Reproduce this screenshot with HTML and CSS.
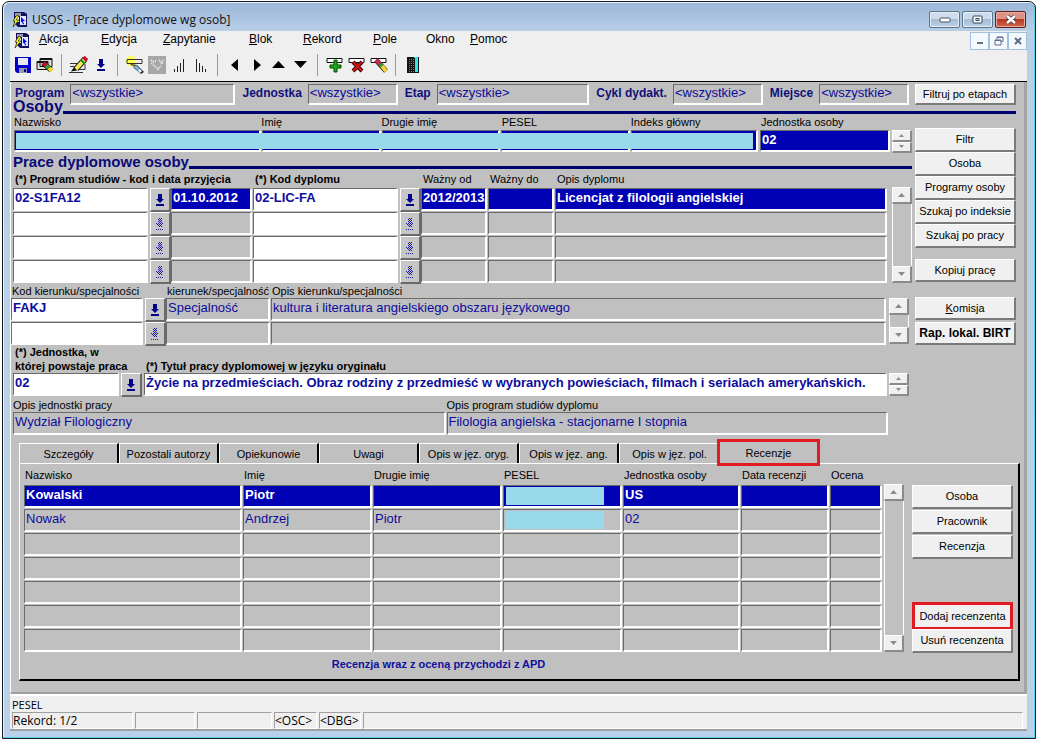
FILE: index.html
```html
<!DOCTYPE html>
<html lang="pl">
<head>
<meta charset="utf-8">
<title>USOS - [Prace dyplomowe wg osob]</title>
<link rel="stylesheet" href="styles.css">
</head>
<body>
<svg class="defs" aria-hidden="true">
  <defs>
    <pattern id="door" width="2" height="2" patternUnits="userSpaceOnUse"><path d="M0 0h2v2H0z" fill="#111"/><path d="M0 0h1v1H0z" fill="#8a8a40"/></pattern>
    <symbol id="app" viewBox="0 0 16 16"><path d="M2 0h10l3 2v13H6l-4-4z" fill="#10105e"/><path d="M3 1h6v3H3z" fill="#9a9aa8"/><path d="M3 5h4v5H3z" fill="#fff"/><path d="M8 4h6v9H8z" fill="#dfe8ff"/><path d="M9 5l4 4h-2l1 3-1 .5-1-3-1 1z" fill="#00f"/><path d="M5 3L1 9h2l-2 6 6-7H4l3-4z" fill="#ff0" stroke="#222" stroke-width=".7"/></symbol>
    <symbol id="down" viewBox="0 0 10 12"><path d="M3 0h4v5h2L5 9 1 5h2zM1 10h8v2H1z" fill="#00008b"/></symbol>
    <symbol id="downoff" viewBox="0 0 10 12"><path d="M4 .5h3M3 1.500h3M4 2.500h3M3 3.500h3M4 4.500h3M1 5.500h8M2 6.500h6M3 7.500h4M4 8.500h3M1 11.500h8" stroke="#1818a0" stroke-dasharray="1 1" shape-rendering="crispEdges"/></symbol>
    <symbol id="up" viewBox="0 0 7 4"><path d="M0 4h7L3.500 0z" fill="#8a8a8a"/></symbol>
    <symbol id="dn" viewBox="0 0 7 4"><path d="M0 0h7L3.500 4z" fill="#8a8a8a"/></symbol>
  </defs>
</svg>
<div class="window">
  <header class="titlebar">
    <svg width="16" height="16"><use href="#app"/></svg>
    <h1>USOS - [Prace dyplomowe wg osob]</h1>
    <div class="winctl">
      <button aria-label="Minimalizuj"><svg width="12" height="6"><rect x="1" y="1" width="10" height="4" rx="1" fill="#fff" stroke="#456"/></svg></button>
      <button aria-label="Maksymalizuj"><svg width="11" height="9"><rect x="1" y="1" width="9" height="7" rx="1" fill="#fff" stroke="#345"/><rect x="4" y="3.500" width="3" height="2" fill="#bcd" stroke="#345"/></svg></button>
      <button class="close" aria-label="Zamknij"><svg width="12" height="9"><path d="M2 1l8 7M10 1L2 8" stroke="#433" stroke-width="4"/><path d="M2 1l8 7M10 1L2 8" stroke="#fff" stroke-width="2.500"/></svg></button>
    </div>
  </header>
  <div class="chrome">
    <nav class="menubar">
      <svg width="16" height="16"><use href="#app"/></svg>
      <div class="menus">
        <button><u>A</u>kcja</button><button><u>E</u>dycja</button><button><u>Z</u>apytanie</button><button><u>B</u>lok</button><button><u>R</u>ekord</button><button><u>P</u>ole</button><button>Okno</button><button><u>P</u>omoc</button>
      </div>
      <div class="docctl">
        <button aria-label="Minimalizuj dokument"><svg width="10" height="10"><path d="M2 7h6" stroke="#5c6f8c" stroke-width="2"/></svg></button>
        <button aria-label="Przywróć dokument"><svg width="10" height="10" fill="none" stroke="#5c6f8c"><path d="M3 3.500V1h6v4.500H7M3 1.500h6M1 4h6v5H1zM1 4.500h6"/></svg></button>
        <button aria-label="Zamknij dokument"><svg width="10" height="10"><path d="M2 2l6 6M8 2L2 8" stroke="#5c6f8c" stroke-width="2"/></svg></button>
      </div>
    </nav>
    <div class="toolbar" role="toolbar" aria-label="Narzędzia">
      <button aria-label="Zapisz"><svg width="16" height="16"><path d="M0 0h16v16H2l-2-2z" fill="#0000c8"/><path d="M3 1h10v7H3z" fill="#e8e8f4"/><path d="M4 11h8v5H4z" fill="#99a"/><path d="M9 12h2v3H9z" fill="#00a"/></svg></button>
      <button aria-label="Wyczyść formularz"><svg width="18" height="18"><path d="M4 2.500h12v8H4zM1 5.500h11v8H1z" fill="#ddd" stroke="#111"/><path d="M1 5h11v2H1zM4 2h12v2H4z" fill="#111"/><path d="M7 7l8 7" stroke="#111" stroke-width="5"/><path d="M7 7l5 4" stroke="#c01030" stroke-width="4"/><path d="M10 10l3 2" stroke="#27a32b" stroke-width="4"/><path d="M13 12l3 3" stroke="#f2d430" stroke-width="4"/></svg></button>
      <i class="sep"></i>
      <button aria-label="Edytuj"><svg width="20" height="18"><path d="M1 7.500h9M1 10.500h6M0 16.500h14M9 13.500h7V8" fill="none" stroke="#333"/><path d="M16 3L7 13" stroke="#222" stroke-width="6"/><path d="M16 3L7 13" stroke="#f4ee50" stroke-width="4"/><path d="M13 6.500l1.500-1.500" stroke="#18911c" stroke-width="5"/><path d="M15 4l2.500-2.500" stroke="#d01030" stroke-width="5"/><path d="M5 11l-3 4.500 6-1z" fill="#111"/></svg></button>
      <button aria-label="Lista wartości"><svg width="10" height="12"><use href="#down"/></svg></button>
      <i class="sep"></i>
      <button aria-label="Wprowadź zapytanie"><svg width="20" height="18"><circle cx="6" cy="5" r="5" fill="#ffff50"/><path d="M2 3.500h15v4H2z" fill="none" stroke="#333"/><path d="M5 8l7 1 7 7-3 2-7-6z" fill="#222"/><path d="M6 9l4 1-2 2z" fill="#dd4"/><path d="M10 10l6 6" stroke="#7fb8e0" stroke-width="3"/><path d="M14 14l2 2" stroke="#fff" stroke-width="2"/></svg></button>
      <button aria-label="Wykonaj zapytanie" disabled><svg width="18" height="18"><path d="M0 0h18v18H0z" fill="#a6a6a6"/><path d="M3 4l3 2-3 2M7 5h2M11 4l3 4 1-4M5 9l3 2 2 2 3-3" fill="none" stroke="#eee" stroke-dasharray="1 1" stroke-width="2"/></svg></button>
      <button aria-label="Sortuj rosnąco"><svg width="14" height="15"><path d="M2.500 11v3M5.500 8v6M8.500 5v9M11.500 1v13" stroke="#222"/></svg></button>
      <button aria-label="Sortuj malejąco"><svg width="14" height="15"><path d="M2.500 1v13M5.500 5v9M8.500 8v6M11.500 11v3" stroke="#222"/></svg></button>
      <i class="sep"></i>
      <button aria-label="Poprzedni blok"><svg width="14" height="12"><path d="M10 0v12L3 6z"/></svg></button>
      <button aria-label="Następny blok"><svg width="14" height="12"><path d="M4 0v12l7-6z"/></svg></button>
      <button aria-label="Poprzedni rekord"><svg width="14" height="12"><path d="M0 9h13L6.500 2z"/></svg></button>
      <button aria-label="Następny rekord"><svg width="14" height="12"><path d="M0 2h13l-6.500 7z"/></svg></button>
      <i class="sep"></i>
      <button aria-label="Dodaj rekord"><svg width="18" height="16"><path d="M1 1.500h15v4H1z" fill="#fff" stroke="#111"/><path d="M8 3h3v5h4v3h-4v4H8v-4H4V8h4z" fill="#1fa51f" stroke="#064d06"/></svg></button>
      <button aria-label="Usuń rekord"><svg width="18" height="16"><path d="M1 1.500h15v4H1z" fill="#fff" stroke="#111"/><path d="M5 5l9 9M14 5l-9 9" stroke="#400" stroke-width="4"/><path d="M5 5l9 9M14 5l-9 9" stroke="#c81818" stroke-width="2"/></svg></button>
      <button aria-label="Wyczyść rekord"><svg width="18" height="16"><path d="M1 1.500h15v4H1z" fill="#fff" stroke="#111"/><path d="M6 3l10 11" stroke="#222" stroke-width="5"/><path d="M6 3l4 4" stroke="#d02850" stroke-width="4"/><path d="M10 7l2 2" stroke="#27a32b" stroke-width="4"/><path d="M12 9l4 5" stroke="#f2d430" stroke-width="4"/></svg></button>
      <i class="sep"></i>
      <button aria-label="Wyjście"><svg width="12" height="16"><path d="M0 0h12v16H0z" fill="#111"/><path d="M7 0h4v15H7z" fill="#2ee6ee"/><path d="M1 2l7-1v14H1z" fill="url(#door)"/></svg></button>
    </div>
  </div>

  <main>
    <div class="filters">
      <label for="f1">Program</label><input id="f1" class="fld f-wide" value="&lt;wszystkie&gt;" readonly>
      <label for="f2">Jednostka</label><input id="f2" class="fld" value="&lt;wszystkie&gt;" readonly>
      <label for="f3">Etap</label><input id="f3" class="fld f-mid" value="&lt;wszystkie&gt;" readonly>
      <label for="f4">Cykl dydakt.</label><input id="f4" class="fld" value="&lt;wszystkie&gt;" readonly>
      <label for="f5">Miejsce</label><input id="f5" class="fld" value="&lt;wszystkie&gt;" readonly>
      <button class="btn">Filtruj po etapach</button>
    </div>
    <h2 class="first">Osoby</h2>
    <div class="upper">
      <div class="forms">
        <div class="person labels">
          <label for="o1">Nazwisko</label><label for="o2">Imię</label><label for="o3">Drugie imię</label><label for="o4">PESEL</label><label for="o5">Indeks główny</label><label for="o6">Jednostka osoby</label>
        </div>
        <div class="person">
          <div class="hidden-data">
            <input id="o1" class="fld sel"><input id="o2" class="fld sel"><input id="o3" class="fld sel"><input id="o4" class="fld sel"><input id="o5" class="fld sel">
          </div>
          <input id="o6" class="fld sel" value="02">
          <div class="spin"><button aria-label="Poprzednia osoba"><svg width="5" height="3"><use href="#up"/></svg></button><button aria-label="Następna osoba"><svg width="5" height="3"><use href="#dn"/></svg></button></div>
        </div>
        <h2>Prace dyplomowe osoby</h2>
        <div class="scrolled theses">
          <table>
            <colgroup><col class="w158"><col class="w82"><col class="w168"><col class="w67"><col class="w67"><col></colgroup>
            <thead><tr><th class="b">(*) Program studiów - kod i data przyjęcia</th><th></th><th class="b">(*) Kod dyplomu</th><th>Ważny od</th><th>Ważny do</th><th>Opis dyplomu</th></tr></thead>
            <tbody>
              <tr><td><div class="lov"><input class="fld edit" aria-label="Program studiów" value="02-S1FA12"><button aria-label="Wybierz program"><svg width="10" height="12"><use href="#down"/></svg></button></div></td><td><input class="fld sel" aria-label="Data przyjęcia" value="01.10.2012"></td><td><div class="lov"><input class="fld edit" aria-label="Kod dyplomu" value="02-LIC-FA"><button aria-label="Wybierz dyplom"><svg width="10" height="12"><use href="#down"/></svg></button></div></td><td><input class="fld sel" aria-label="Ważny od" value="2012/2013/L"></td><td><input class="fld sel" aria-label="Ważny do"></td><td><input class="fld sel" aria-label="Opis dyplomu" value="Licencjat z filologii angielskiej"></td></tr>
              <tr><td><div class="lov"><input class="fld edit" aria-label="Program studiów 2"><button disabled aria-label="Wybierz program"><svg width="10" height="12"><use href="#downoff"/></svg></button></div></td><td><input class="fld" aria-label="Data przyjęcia 2"></td><td><div class="lov"><input class="fld edit" aria-label="Kod dyplomu 2"><button disabled aria-label="Wybierz dyplom"><svg width="10" height="12"><use href="#downoff"/></svg></button></div></td><td><input class="fld" aria-label="Ważny od 2"></td><td><input class="fld" aria-label="Ważny do 2"></td><td><input class="fld" aria-label="Opis dyplomu 2"></td></tr>
              <tr><td><div class="lov"><input class="fld edit" aria-label="Program studiów 3"><button disabled aria-label="Wybierz program"><svg width="10" height="12"><use href="#downoff"/></svg></button></div></td><td><input class="fld" aria-label="Data przyjęcia 3"></td><td><div class="lov"><input class="fld edit" aria-label="Kod dyplomu 3"><button disabled aria-label="Wybierz dyplom"><svg width="10" height="12"><use href="#downoff"/></svg></button></div></td><td><input class="fld" aria-label="Ważny od 3"></td><td><input class="fld" aria-label="Ważny do 3"></td><td><input class="fld" aria-label="Opis dyplomu 3"></td></tr>
              <tr><td><div class="lov"><input class="fld edit" aria-label="Program studiów 4"><button disabled aria-label="Wybierz program"><svg width="10" height="12"><use href="#downoff"/></svg></button></div></td><td><input class="fld" aria-label="Data przyjęcia 4"></td><td><div class="lov"><input class="fld edit" aria-label="Kod dyplomu 4"><button disabled aria-label="Wybierz dyplom"><svg width="10" height="12"><use href="#downoff"/></svg></button></div></td><td><input class="fld" aria-label="Ważny od 4"></td><td><input class="fld" aria-label="Ważny do 4"></td><td><input class="fld" aria-label="Opis dyplomu 4"></td></tr>
            </tbody>
          </table>
          <div class="scroll"><button aria-label="W górę"><svg width="7" height="4"><use href="#up"/></svg></button><button aria-label="W dół"><svg width="7" height="4"><use href="#dn"/></svg></button></div>
        </div>
        <div class="scrolled field-of-study">
          <table>
            <colgroup><col class="w155"><col class="w105"><col></colgroup>
            <thead><tr><th>Kod kierunku/specjalności</th><th>kierunek/specjalność</th><th>Opis kierunku/specjalności</th></tr></thead>
            <tbody>
              <tr><td><div class="lov"><input class="fld edit" aria-label="Kod kierunku" value="FAKJ"><button aria-label="Wybierz kierunek"><svg width="10" height="12"><use href="#down"/></svg></button></div></td><td><input class="fld" aria-label="Kierunek/specjalność" value="Specjalność"></td><td><input class="fld" aria-label="Opis kierunku" value="kultura i literatura angielskiego obszaru językowego"></td></tr>
              <tr><td><div class="lov"><input class="fld edit" aria-label="Kod kierunku 2"><button disabled aria-label="Wybierz kierunek"><svg width="10" height="12"><use href="#downoff"/></svg></button></div></td><td><input class="fld" aria-label="Kierunek/specjalność 2"></td><td><input class="fld" aria-label="Opis kierunku 2"></td></tr>
            </tbody>
          </table>
          <div class="scroll"><button aria-label="W górę"><svg width="7" height="4"><use href="#up"/></svg></button><button aria-label="W dół"><svg width="7" height="4"><use href="#dn"/></svg></button></div>
        </div>
        <div class="work">
          <label class="b" for="p1">(*) Jednostka, w<br>której powstaje praca</label><label class="b" for="p2">(*) Tytuł pracy dyplomowej w języku oryginału</label><span></span>
          <div class="lov"><input id="p1" class="fld edit" value="02"><button aria-label="Wybierz jednostkę"><svg width="10" height="12"><use href="#down"/></svg></button></div>
          <input id="p2" class="fld edit" value="Życie na przedmieściach. Obraz rodziny z przedmieść w wybranych powieściach, filmach i serialach amerykańskich.">
          <div class="spin"><button aria-label="Poprzedni tytuł"><svg width="5" height="3"><use href="#up"/></svg></button><button aria-label="Następny tytuł"><svg width="5" height="3"><use href="#dn"/></svg></button></div>
        </div>
        <div class="descr">
          <label for="d1">Opis jednostki pracy</label><label for="d2">Opis program studiów dyplomu</label>
          <input id="d1" class="fld" value="Wydział Filologiczny" readonly><input id="d2" class="fld" value="Filologia angielska - stacjonarne I stopnia" readonly>
        </div>
      </div>
      <aside class="actions">
        <button class="btn">Filtr</button><button class="btn">Osoba</button><button class="btn">Programy osoby</button><button class="btn">Szukaj po indeksie</button><button class="btn">Szukaj po pracy</button>
        <button class="btn copy">Kopiuj pracę</button>
        <button class="btn board"><span><u>K</u>omisja</span></button><button class="btn report">Rap. lokal. BIRT</button>
      </aside>
    </div>

    <div class="tabs" role="tablist">
      <button role="tab">Szczegóły</button><button role="tab">Pozostali autorzy</button><button role="tab">Opiekunowie</button><button role="tab">Uwagi</button><button role="tab">Opis w jęz. oryg.</button><button role="tab">Opis w jęz. ang.</button><button role="tab">Opis w jęz. pol.</button><button role="tab" aria-selected="true">Recenzje</button>
    </div>
    <section class="panel">
      <div class="reviews">
        <div class="scrolled">
          <table>
            <colgroup><col><col class="w130"><col class="w130"><col class="w120"><col class="w118"><col class="w89"><col class="w53"></colgroup>
            <thead><tr><th>Nazwisko</th><th>Imię</th><th>Drugie imię</th><th>PESEL</th><th>Jednostka osoby</th><th>Data recenzji</th><th>Ocena</th></tr></thead>
            <tbody>
              <tr class="current"><td><div class="fld">Kowalski</div></td><td><div class="fld">Piotr</div></td><td><div class="fld"></div></td><td><div class="fld"><i class="mask"></i></div></td><td><div class="fld">US</div></td><td><div class="fld"></div></td><td><div class="fld"></div></td></tr>
              <tr><td><div class="fld">Nowak</div></td><td><div class="fld">Andrzej</div></td><td><div class="fld">Piotr</div></td><td><div class="fld"><i class="mask"></i></div></td><td><div class="fld">02</div></td><td><div class="fld"></div></td><td><div class="fld"></div></td></tr>
              <tr><td><div class="fld"></div></td><td><div class="fld"></div></td><td><div class="fld"></div></td><td><div class="fld"></div></td><td><div class="fld"></div></td><td><div class="fld"></div></td><td><div class="fld"></div></td></tr>
              <tr><td><div class="fld"></div></td><td><div class="fld"></div></td><td><div class="fld"></div></td><td><div class="fld"></div></td><td><div class="fld"></div></td><td><div class="fld"></div></td><td><div class="fld"></div></td></tr>
              <tr><td><div class="fld"></div></td><td><div class="fld"></div></td><td><div class="fld"></div></td><td><div class="fld"></div></td><td><div class="fld"></div></td><td><div class="fld"></div></td><td><div class="fld"></div></td></tr>
              <tr><td><div class="fld"></div></td><td><div class="fld"></div></td><td><div class="fld"></div></td><td><div class="fld"></div></td><td><div class="fld"></div></td><td><div class="fld"></div></td><td><div class="fld"></div></td></tr>
              <tr><td><div class="fld"></div></td><td><div class="fld"></div></td><td><div class="fld"></div></td><td><div class="fld"></div></td><td><div class="fld"></div></td><td><div class="fld"></div></td><td><div class="fld"></div></td></tr>
            </tbody>
          </table>
          <div class="scroll"><button aria-label="W górę"><svg width="7" height="4"><use href="#up"/></svg></button><button aria-label="W dół"><svg width="7" height="4"><use href="#dn"/></svg></button></div>
        </div>
        <p class="note">Recenzja wraz z oceną przychodzi z APD</p>
      </div>
      <aside class="review-actions">
        <button class="btn">Osoba</button><button class="btn">Pracownik</button><button class="btn">Recenzja</button>
        <button class="btn marked">Dodaj recenzenta</button><button class="btn">Usuń recenzenta</button>
      </aside>
    </section>
  </main>

  <footer>
    <div class="hint">PESEL</div>
    <div class="status"><span>Rekord: 1/2</span><span></span><span></span><span>&lt;OSC&gt;</span><span>&lt;DBG&gt;</span><span></span></div>
  </footer>
</div>
</body>
</html>
```

FILE: styles.css
```css
* { box-sizing: border-box; }
body { margin: 0; background: #fff; font: 11px/14px "Liberation Sans", Arial, sans-serif; color: #000; }
button, input { font: inherit; color: inherit; margin: 0; padding: 0; border: 0; background: none; border-radius: 0; min-width: 0; }
h1, h2, p { margin: 0; }
svg { display: block; flex: none; }
.defs { position: absolute; width: 0; height: 0; }
.b { font-weight: bold; }

.window { display: flex; flex-direction: column; min-height: calc(100vh - 3px); margin: 1px 2px 2px; padding: 0 8px 7px 7px; border: 1px solid #151c20; border-radius: 7px 7px 0 0; background: linear-gradient(#9ab7d8, #b9cfe7 30px, #b9d1ea); box-shadow: inset -1px -1px #5cd3ea, inset 1px 1px #e8f2fb; }
.titlebar { display: flex; align-items: center; gap: 4px; height: 29px; padding: 6px 1px 0 2px; }
h1 { flex: 1; font: 12px/16px "Open Sans", "Noto Sans", sans-serif; color: #111; }
.winctl, .docctl { display: flex; gap: 2px; }
.winctl button { display: grid; place-items: center; width: 31px; height: 17px; border: 1px solid #5f7489; border-radius: 2px; background: linear-gradient(#cddcec 45%, #a5bcd4 50%, #bed2e6); box-shadow: inset 0 0 0 1px #e4eef7; }
.winctl .close { background: linear-gradient(#dd9285 45%, #b83824 50%, #d3694f); border-color: #5a1d18; box-shadow: inset 0 0 0 1px #e8aea2; }

.chrome { background: #efefef; border-bottom: 1px solid #000; }
.menubar { display: flex; height: 19px; padding-left: 4px; gap: 9px; align-items: center; }
.menus { display: grid; flex: 1; grid-template-columns: 62px 62px 86px 54px 70px 53px 44px auto; justify-content: start; font-size: 12px; }
.menus button { height: 19px; padding-bottom: 3px; text-align: left; }
.docctl { gap: 0; }
.docctl button { display: grid; place-items: center; width: 19px; height: 18px; border: 1px solid #a5c0de; background: #f4f9fe; }
.toolbar { display: flex; align-items: center; height: 31px; padding: 0 0 1px 2px; }
.toolbar button { display: grid; place-items: center; width: 22px; height: 22px; }
.sep { width: 1px; height: 22px; margin: 0 6px 0 5px; background: #9a9a9a; }

main { flex: 1; padding: 2px 8px 9px 2px; background: #c0c0c0; border-left: 1px solid #fff; border-right: 3px solid #a4a4a4; border-bottom: 2px solid #a0a0a0; }
.fld { display: block; width: 100%; height: 23px; padding: 0 0 3px 1px; border: solid; border-width: 1px 2px 2px 1px; border-color: #6a6a6a #fff #fff #6a6a6a; background: #c0c0c0; color: #0c0c9c; font-size: 13px; line-height: 17px; overflow: hidden; white-space: nowrap; outline: 0; }
.fld.edit { background: #fff; font-weight: bold; }
.fld.sel, .current .fld { background: #0000b4; color: #fff; font-weight: bold; }
.btn { display: grid; place-items: center; width: 100%; height: 24px; padding-bottom: 1px; background: #f0f0f0; border: solid; border-width: 1px 2px 2px 1px; border-color: #fff #7a7a7a #7a7a7a #fff; white-space: nowrap; }

.filters { display: flex; align-items: center; height: 21px; padding-left: 2px; }
.filters label { padding: 0 6px 4px 7px; font-weight: bold; font-size: 12px; color: #10107c; white-space: nowrap; }
.filters label:first-child { padding-left: 0; }
.filters .fld { flex: 89; height: 21px; }
.filters .f-wide { flex: 167; }
.filters .f-mid { flex: 154; }
.filters .btn { flex: none; width: 101px; height: 21px; margin-left: 6px; padding: 0; }

h2 { display: flex; align-items: flex-end; height: 16px; font-size: 15px; line-height: 14px; color: #0a0a78; white-space: nowrap; }
h2::after { content: ""; flex: 1; height: 3px; background: #00006e; }
h2.first { height: 9px; font-size: 16px; }

.upper { display: grid; grid-template-columns: minmax(0, 1fr) 101px; column-gap: 3px; }
.forms { min-width: 0; }
.person { display: grid; grid-template-columns: minmax(0, 1fr) 130px 20px; padding-left: 1px; column-gap: 2px; }
.person.labels { grid-template-columns: 247fr 120fr 120fr 129fr 130fr 151px; column-gap: 0; height: 16px; align-items: center; }
.person .fld { height: 22px; }
.hidden-data { position: relative; display: grid; grid-template-columns: 246fr 119fr 118fr 128fr 127fr; gap: 1px; background: #c0c0c0; }
.hidden-data::after { content: ""; position: absolute; inset: 3px 5px 4px 2px; background: #99d9ea; pointer-events: none; }
.spin { display: grid; width: 20px; height: 23px; }
.spin button, .scroll button { display: grid; place-items: center; background: #f0f0f0; border: solid; border-width: 1px 2px 2px 1px; border-color: #fff #8a8a8a #8a8a8a #fff; }

.scrolled { display: flex; gap: 4px; align-items: flex-end; }
.scroll { display: flex; flex: none; flex-direction: column; justify-content: space-between; width: 20px; border-right: 1px solid #fff; border-left: 1px solid #fff; margin-bottom: 1px; }
.scroll button { height: 17px; margin: 0 -1px; }
.theses .scroll { height: 96px; }
.field-of-study .scroll { height: 46px; margin-bottom: 2px; }
.reviews .scroll { height: 168px; }
table { flex: 1; width: 100%; table-layout: fixed; border-collapse: collapse; }
th { height: 19px; padding: 0 0 0 2px; text-align: left; font-weight: normal; white-space: nowrap; }
th.b { font-weight: bold; }
td { height: 24px; padding: 0 1px 1px 0; }
.w158 { width: 158px; } .w82 { width: 82px; } .w168 { width: 168px; } .w67 { width: 67px; }
.w155 { width: 155px; } .w105 { width: 105px; } .w130 { width: 130px; } .w120 { width: 120px; }
.w118 { width: 118px; } .w89 { width: 89px; } .w53 { width: 53px; }
.lov { display: flex; gap: 2px; margin-right: -1px; }
.lov .fld { flex: 1; }
.lov button { display: grid; flex: none; place-items: center; width: 21px; height: 24px; margin-bottom: -1px; background: #c6c6c6; border: solid; border-width: 1px 2px 2px 1px; border-color: #fff #6a6a6a #6a6a6a #fff; }
.field-of-study { margin-left: -2px; margin-right: 3px; gap: 2px; }
.field-of-study th { height: 14px; padding-left: 1px; }

.work { display: grid; grid-template-columns: 129px minmax(0, 1fr) 20px; column-gap: 2px; margin-right: 3px; }
.work label { display: flex; align-items: flex-end; height: 27px; padding-left: 2px; line-height: 14px; white-space: nowrap; }
.work .lov { margin-right: 0; }
.descr { display: grid; grid-template-columns: 433fr 442fr; column-gap: 1px; margin-right: 24px; }
.descr label { height: 16px; line-height: 18px; }

.actions { display: flex; flex-direction: column; padding-top: 14px; }
.actions .copy { height: 23px; margin-top: 11px; }
.actions .board { height: 23px; margin-top: 15px; }
.actions .report { height: 23px; margin-top: 2px; font-size: 12px; font-weight: bold; }

.tabs { display: flex; margin: 8px 0 0 6px; }
.tabs button { width: 100px; height: 20px; border: solid; border-width: 1px 2px 0 1px; border-color: #fff #000 #000 #fff; white-space: nowrap; }
.tabs button:nth-child(7) { border-right: 0; }
.tabs button[aria-selected] { width: 103px; height: 27px; margin: -4px 0 -3px -2px; border: 3px solid #e01b24; z-index: 1; background: #c0c0c0; }
.panel { display: grid; grid-template-columns: minmax(0, 1fr) 101px; column-gap: 8px; margin: 0 -4px 0 6px; padding: 3px 5px 0 4px; min-height: 218px; border: solid; border-width: 1px 2px 2px 1px; border-color: #fff #000 #000 #fff; }
.reviews .scrolled { gap: 1px; }
.reviews .fld { height: 23px; }
.reviews th { height: 18px; padding-left: 1px; padding-bottom: 2px; }
.mask { display: block; width: 85%; height: 18px; margin: 1px 0 0 1px; background: #99d9ea; }
.note { padding: 4px 51px 0 0; text-align: center; font-weight: bold; color: #10109c; }
.review-actions { display: flex; flex-direction: column; gap: 1px; padding-top: 18px; }
.review-actions .marked { height: 28px; margin-top: 42px; margin-bottom: -2px; border: 3px solid #e01b24; padding: 0; }

footer { padding: 1px 4px 0 2px; background: #efefef; border-top: 2px solid #fff; border-bottom: 2px solid #a0a0a0; font: 12px/15px "Open Sans", "Noto Sans", sans-serif; }
.hint { font-size: 11px; }
.status { display: grid; grid-template-columns: 121px 60px 75px 43px 42px 1fr; column-gap: 2px; }
.status span { height: 17px; border: solid 1px; border-color: #a0a0a0 #fff #fff #a0a0a0; white-space: nowrap; }
```
